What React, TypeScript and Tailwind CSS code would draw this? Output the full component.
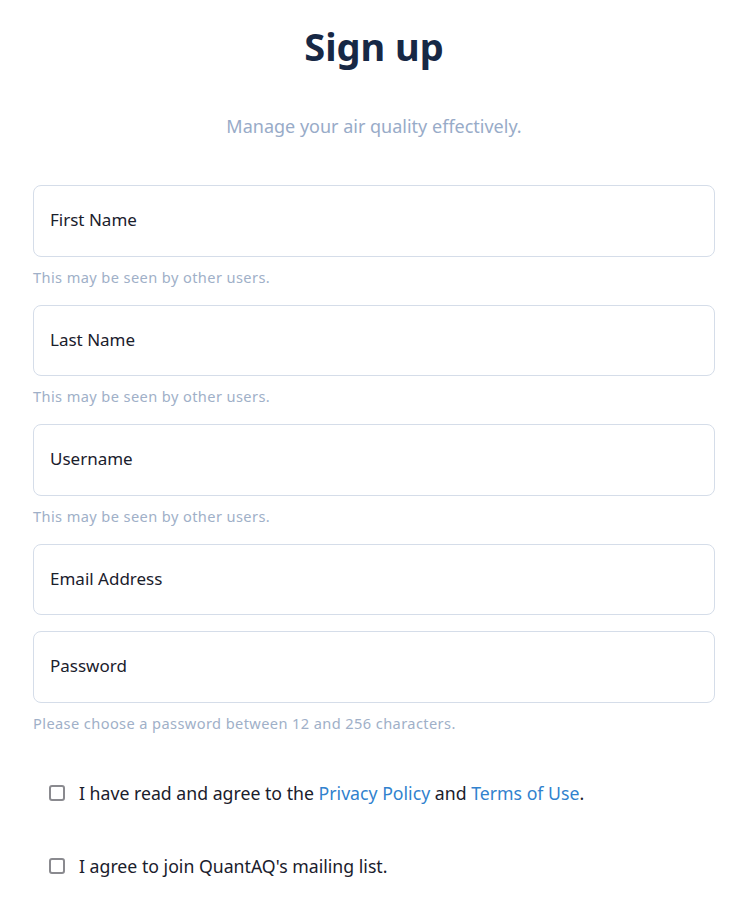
import React from 'react';

const fieldFont = { fontFamily: '"Noto Sans", "Open Sans", sans-serif' };

function Field({ label, hint, type = 'text' }: { label: string; hint?: string; type?: string }) {
  return (
    <div className={hint ? '' : 'mb-4'}>
      <input
        type={type}
        placeholder={label}
        className="block w-full h-[71.5px] rounded-lg border border-[#d5dde9] bg-white px-4 pb-[2px] text-[17px] text-[#1a202c] placeholder:text-[#1a202c] outline-none"
      />
      {hint && (
        <p className="h-[48px] pt-[10px] text-[14.6px] leading-[20px] tracking-[0.4px] text-[#a0b0c8]">{hint}</p>
      )}
    </div>
  );
}

function Check({ children }: { children: React.ReactNode }) {
  return (
    <label className="flex items-center gap-[14px] pl-4 text-[17.7px] leading-[24px] text-[#1a202c]">
      <input
        type="checkbox"
        className="h-[16px] w-[16px] shrink-0 appearance-none rounded-[3px] border-2 border-[#8a8a8f] bg-white"
      />
      <span>{children}</span>
    </label>
  );
}

export default function App() {
  return (
    <div className="min-h-screen bg-white" style={fieldFont}>
      <div className="ml-[33px] w-[682px] pt-[23px]">
        <h1 className="text-center text-[38px] font-bold leading-[46px] text-[#172845]">Sign up</h1>
        <p className="mt-[45px] text-center text-[18px] leading-[24px] text-[#98abc8]">
          Manage your air quality effectively.
        </p>

        <form className="mt-[47px]">
          <Field label="First Name" hint="This may be seen by other users." />
          <Field label="Last Name" hint="This may be seen by other users." />
          <Field label="Username" hint="This may be seen by other users." />
          <Field label="Email Address" type="email" />
          <Field label="Password" type="password" hint="Please choose a password between 12 and 256 characters." />

          <div className="mt-[30px] flex flex-col gap-[49px]">
            <Check>
              I have read and agree to the{' '}
              <a href="#" className="text-[#3182ce]">Privacy Policy</a> and{' '}
              <a href="#" className="text-[#3182ce]">Terms of Use</a>.
            </Check>
            <Check>I agree to join QuantAQ's mailing list.</Check>
          </div>
        </form>
      </div>
    </div>
  );
}
